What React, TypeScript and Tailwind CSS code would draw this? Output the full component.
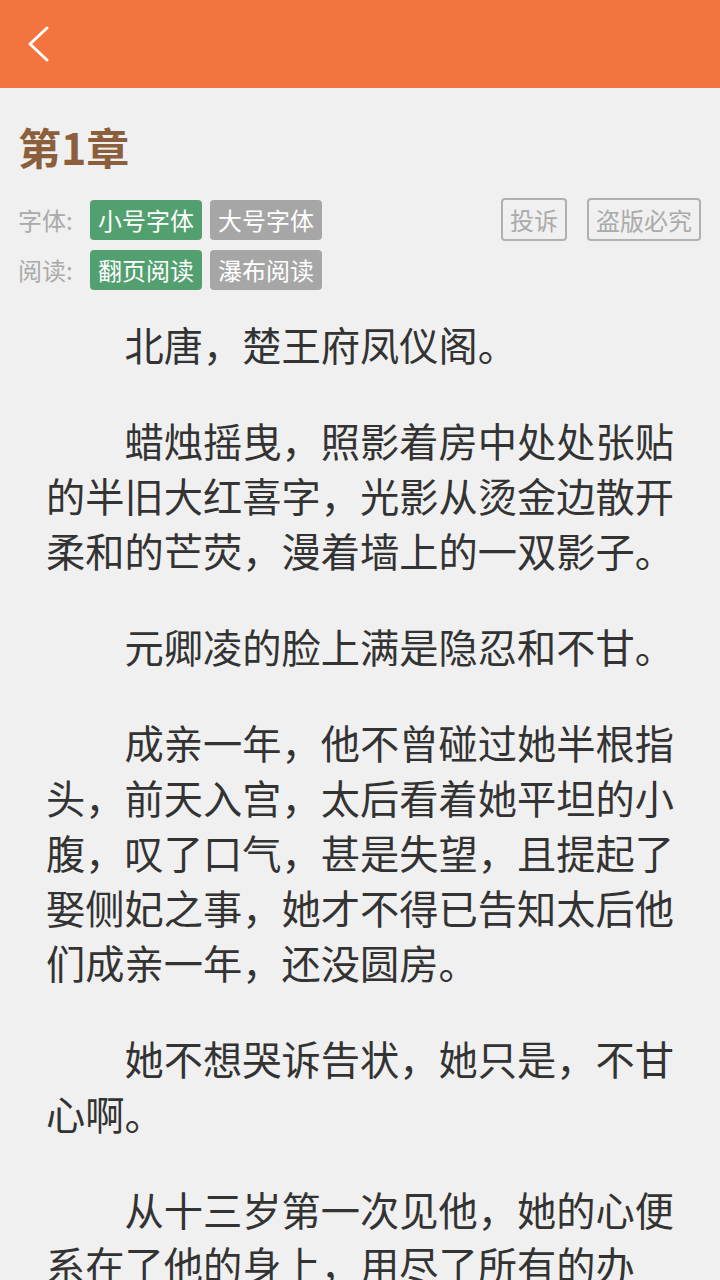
import React from "react";

const paragraphs = [
  "北唐，楚王府凤仪阁。",
  "蜡烛摇曳，照影着房中处处张贴的半旧大红喜字，光影从烫金边散开柔和的芒荧，漫着墙上的一双影子。",
  "元卿凌的脸上满是隐忍和不甘。",
  "成亲一年，他不曾碰过她半根指头，前天入宫，太后看着她平坦的小腹，叹了口气，甚是失望，且提起了娶侧妃之事，她才不得已告知太后他们成亲一年，还没圆房。",
  "她不想哭诉告状，她只是，不甘心啊。",
  "从十三岁第一次见他，她的心便系在了他的身上，用尽了所有的办法，终于嫁给了他，可他却从不正眼看她。",
];

export default function App() {
  const font = { fontFamily: '"Noto Sans CJK SC", "Noto Sans", sans-serif' };
  return (
    <div className="min-h-[1280px] bg-[#f0f0f0]" style={font}>
      <div className="h-[88px] bg-[#f4743f] flex items-center pl-[27px]">
        <svg width="26" height="40" viewBox="0 0 26 40" fill="none">
          <path d="M20 4 L3 20 L20 36" stroke="#ffffff" strokeWidth="3" strokeLinecap="round" strokeLinejoin="round" />
        </svg>
      </div>
      <div className="pt-[32px] px-[18px]">
        <h1 className="text-[43px] leading-[52px] font-bold text-[#8b5e3c]">第1章</h1>
        <div className="mt-[28px] flex justify-between">
          <div className="flex flex-col gap-[10px]">
            <div className="flex items-center">
              <span className="w-[72px] text-[24px] text-[#aaaaaa]">字体:</span>
              <span className="h-[40px] px-[8px] rounded-[4px] bg-[#52a06f] text-white text-[24px] flex items-center">小号字体</span>
              <span className="ml-[8px] h-[40px] px-[8px] rounded-[4px] bg-[#a6a6a6] text-white text-[24px] flex items-center">大号字体</span>
            </div>
            <div className="flex items-center">
              <span className="w-[72px] text-[24px] text-[#aaaaaa]">阅读:</span>
              <span className="h-[40px] px-[8px] rounded-[4px] bg-[#52a06f] text-white text-[24px] flex items-center">翻页阅读</span>
              <span className="ml-[8px] h-[40px] px-[8px] rounded-[4px] bg-[#a6a6a6] text-white text-[24px] flex items-center">瀑布阅读</span>
            </div>
          </div>
          <div className="flex items-start gap-[20px] -mt-[2px] mr-[1px]">
            <span className="h-[43px] px-[7px] border-2 border-[#b0b0b0] rounded-[4px] text-[24px] text-[#aaaaaa] flex items-center">投诉</span>
            <span className="h-[43px] px-[7px] border-2 border-[#b0b0b0] rounded-[4px] text-[24px] text-[#aaaaaa] flex items-center">盗版必究</span>
          </div>
        </div>
      </div>
      <div className="mt-[26px] pl-[46px] pr-[44px] text-[39.25px] leading-[55px] text-[#333333]">
        {paragraphs.map((p, i) => (
          <p key={i} className="indent-[2em] mb-[41px]">
            {p}
          </p>
        ))}
      </div>
    </div>
  );
}
